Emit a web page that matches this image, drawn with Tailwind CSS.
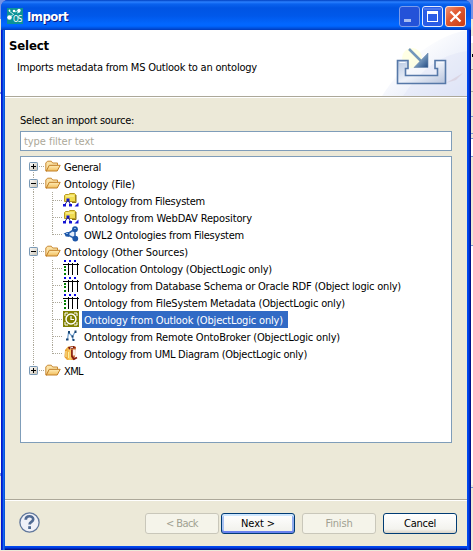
<!DOCTYPE html>
<html lang="en">
<head>
<meta charset="utf-8">
<title>Import</title>
<script src="https://cdn.jsdelivr.net/npm/@tailwindcss/browser@4"></script>
</head>
<body class="w-[473px] h-[551px] overflow-hidden bg-[#ece9d8] font-['DejaVu_Sans_Condensed','DejaVu_Sans',sans-serif] text-[11px] leading-[17px] text-black">
<svg width="0" height="0" class="absolute">
  <defs>
    <linearGradient id="fg" x1="0" y1="0" x2="0" y2="1"><stop offset="0" stop-color="#ffedb8"/><stop offset="1" stop-color="#f1bd5c"/></linearGradient>
    <linearGradient id="bx" x1="0" y1="0" x2="1" y2="1"><stop offset="0" stop-color="#fff"/><stop offset="1" stop-color="#c8c1b2"/></linearGradient>
    <linearGradient id="tray" x1="0" y1="0" x2="1" y2="1"><stop offset="0" stop-color="#b8c9e2"/><stop offset=".5" stop-color="#edf1f9"/><stop offset="1" stop-color="#b8c4dc"/></linearGradient>
    <linearGradient id="arr" x1="0" y1="0" x2="1" y2="1"><stop offset="0" stop-color="#c5d8e8"/><stop offset=".6" stop-color="#6387b0"/><stop offset="1" stop-color="#234b83"/></linearGradient>
    <linearGradient id="swA" x1="0" y1="0" x2="1" y2="1"><stop offset=".3" stop-color="#fff"/><stop offset="1" stop-color="#dce3f6"/></linearGradient>
    <linearGradient id="bk" x1="0" y1="0" x2="1" y2="0"><stop offset="0" stop-color="#e08a1c"/><stop offset=".5" stop-color="#ffd56a"/><stop offset="1" stop-color="#b33c12"/></linearGradient>
    <symbol id="plus" viewBox="0 0 9 9"><rect x=".5" y=".5" width="8" height="8" rx=".7" fill="url(#bx)" stroke="#7898b5"/><path d="M2 4.500h5M4.500 2v5" stroke="#000"/></symbol>
    <symbol id="minus" viewBox="0 0 9 9"><rect x=".5" y=".5" width="8" height="8" rx=".7" fill="url(#bx)" stroke="#7898b5"/><path d="M2 4.500h5" stroke="#000"/></symbol>
    <symbol id="folder" viewBox="0 0 16 16"><path d="M.8 13V5L2.500 3.200h3.800L7.700 5h4.800v2.500H4.300L1.500 13.300z" fill="#fbe2a5" stroke="#c98a35"/><path d="M4.300 7.300h10.900l-3 5.700H1.300z" fill="url(#fg)" stroke="#c28028"/></symbol>
    <symbol id="fileonto" viewBox="0 0 16 16"><path d="M1.500 9.500V3.500l1-1h3L7 1.500h4.500l1 1v7z" fill="#f0dc50" stroke="#b89a20"/><path d="M3 4h8" stroke="#fff8b0"/><path d="M13 3v7.500H9" stroke="#8c7412" fill="none"/><path d="M3.500 6.500h3v3h-3zM0 12h3v2.500H0zM6 12h3v2.500H6z" fill="#1212d8"/><path d="M5 8L2 12.500M5 8l2.500 4.500" stroke="#1a1aa0"/><path d="M15.500 10.500v4h-4z" fill="#1212d8"/></symbol>
    <symbol id="owl" viewBox="0 0 16 16"><path d="M3.500 8.500L12 3v9.500z" fill="#e5eefb" stroke="#2a62ad" stroke-width="1.500"/><circle cx="12" cy="3.200" r="2.900" fill="#1c56a8"/><circle cx="12.300" cy="12.600" r="2.900" fill="#1c56a8"/><path d="M.5 7.500l5.500-1.500v5z" fill="#1c56a8"/><circle cx="4.200" cy="8.500" r="2.300" fill="#1c56a8"/><path d="M11 2.500h2M3 7.500h2" stroke="#8db6e8"/></symbol>
    <symbol id="table" viewBox="0 0 16 16" shape-rendering="crispEdges"><path d="M1 0h2v2H1zM6 0h2v2H6zM11 0h2v2h-2z" fill="#0808e8"/><path d="M1 6h2v2H1zM1 9h2v2H1zM1 13h2v2H1z" fill="#008000"/><path d="M0 4.500h16M5.500 3v12M9.500 3v12M14.500 3v12" stroke="#000"/></symbol>
    <symbol id="clock" viewBox="0 0 16 16"><path d="M0 0h16v16H0z" fill="#808000"/><circle cx="8" cy="8" r="5" fill="none" stroke="#fff" stroke-width="1.500"/><path d="M8 5v3.500h3" fill="none" stroke="#fff" stroke-width="1.200"/><path d="M2 5V2h3M11 2h3v3M2 11v3h3M11 14h3v-3" fill="none" stroke="#fff"/></symbol>
    <symbol id="nodes" viewBox="0 0 16 16"><path d="M4.500 12L5.500 4.500L9.500 8.500 12 4M9.500 8.500L10 12" fill="none" stroke="#6b9ccc" stroke-width="1.200"/><path d="M5 3h2v2.500H5zM11.500 2.500h2v2.500h-2zM3 10.500h2.500v2H3zM9.500 11h2v2h-2zM8.500 7.500h2v2h-2z" fill="#1a4674"/></symbol>
    <symbol id="book" viewBox="0 0 16 16"><path d="M2 5L5 1.500l6-.5 2 1-1 9-1 4H4L1.500 12z" fill="url(#bk)"/><path d="M5 2l6-1 1 2-6 1.500z" fill="#7c1910"/><path d="M7 3.200l3-1" stroke="#fff"/><path d="M9 4.500v7l2 2.500 3-1.500" stroke="#861a10" stroke-width="1.800" fill="none"/><path d="M9.800 4.500h3v6h-3z" fill="#fbeee4"/><path d="M3 6v6M5.500 7v6" stroke="#fff0a0"/></symbol>
  </defs>
</svg>

<div class="relative w-[473px] h-[551px] bg-[linear-gradient(#7593e5_0_19px,#ece9d8_19px_36px,#fff_36px_43px,#ece9d8_43px_69px,#aaa899_69px_70px,#ece9d8_70px_91px,#aaa899_91px_92px,#ece9d8_92px_116px,#7898c8_116px_117px,#ece9d8_117px_133px,#7898c8_133px_134px,#ece9d8_134px_138px,#7898c8_138px_139px,#fff_139px_156px,#7898c8_156px_157px,#ece9d8_157px_245px,#7898c8_245px_246px,#fff_246px_470px,#f7f6f0_470px_485px,#ece9d8_485px_487px,#7898c8_487px_488px,#ece9d8_488px)]">
  <div class="absolute left-0 top-0 w-px h-[551px] bg-[linear-gradient(#7593e5_0_19px,#ece9d8_19px_92px,#7593e5_92px_94px,#fff_94px_473px,#7593e5_473px_476px,#ece9d8_476px)]"></div>
  <div class="absolute left-[472px] top-[54px] w-px h-[3px] bg-black"></div>

  <main class="relative ml-px w-[470px] h-[550px] rounded-t-[7px] overflow-hidden bg-[#0831d9] flex flex-col">
    <header class="h-[30px] shrink-0 flex items-center pl-[6px] pr-[5px] bg-[linear-gradient(#0040c0_0,#2a80ff_2px,#0a62ee_4px,#0054e3_8px,#0058ea_16px,#0267ff_24px,#0066ff_26px,#0048d0_29px,#0038b8_30px)]">
      <svg class="w-4 h-4 mt-[1px]" viewBox="0 0 16 16"><rect width="16" height="16" fill="#0c9297"/><path d="M2 3l4 3M8 4l4-2M10 5l3-1M3 9l4-3" stroke="#b8eee9" stroke-width="1"/><circle cx="7" cy="3" r="1.300" fill="#fff"/><circle cx="12" cy="2.500" r="1.700" fill="#fff"/><circle cx="2.500" cy="9.500" r="2.300" fill="#fff"/><circle cx="2.500" cy="2.500" r=".9" fill="#fff"/><text x="6" y="14" font-size="8" letter-spacing="-.9" fill="#fff" font-family="DejaVu Sans Condensed">OS</text></svg>
      <h1 class="ml-1 mt-[3px] text-[13px] font-bold text-white [text-shadow:1px_1px_0_#0a1883]"><span data-font="bold 13px" data-w="41">Import</span></h1>
      <div class="ml-auto mt-[2px] flex gap-[2px]">
        <svg class="w-[21px] h-[21px]" viewBox="0 0 21 21"><rect x=".5" y=".5" width="20" height="20" rx="2.500" fill="#2452d8" stroke="#7b9bea"/><path d="M5 14.500h7" stroke="#a9bdf0" stroke-width="3"/></svg>
        <svg class="w-[21px] h-[21px]" viewBox="0 0 21 21"><rect x=".5" y=".5" width="20" height="20" rx="2.500" fill="#2a5ce6" stroke="#e3ebff"/><path d="M2 3h17" stroke="#6d92f2"/><rect x="5.500" y="5.500" width="10" height="10" fill="none" stroke="#fff"/><path d="M5 6.500h11" stroke="#fff" stroke-width="3"/></svg>
        <svg class="w-[21px] h-[21px]" viewBox="0 0 21 21"><defs><linearGradient id="cl" x2="1" y2="1"><stop stop-color="#f09478"/><stop offset=".4" stop-color="#e25b33"/><stop offset="1" stop-color="#c83a12"/></linearGradient></defs><rect x=".5" y=".5" width="20" height="20" rx="2.500" fill="url(#cl)" stroke="#fbe3dc"/><path d="M5.500 5.500l10 10M15.500 5.500l-10 10" stroke="#fff" stroke-width="2.200"/></svg>
      </div>
    </header>

    <div class="flex-1 min-h-0 px-1 pb-1 bg-[linear-gradient(90deg,#0019cf_0_1px,#0831d9_1px_2px,#166aee_2px_3px,#0855dd_3px_4px,#0048f1_4px_467px,#0040e0_467px_468px,#0029c0_468px_469px,#00138c_469px)]">
      <div class="h-[516px] flex flex-col bg-[#ece9d8] shadow-[0_1px_0_#0048f1,0_2px_0_#0040e0,0_3px_0_#0029c0,0_4px_0_#00138c]">
        <section class="relative h-[66px] shrink-0 bg-white flex justify-between">
          <div class="pl-1 pt-[7px]">
            <h2 class="text-[13px] font-bold leading-[17px]"><span data-font="bold 13px" data-w="40">Select</span></h2>
            <p class="pl-2 mt-[5px] text-[11px]"><span data-w="240">Imports metadata from MS Outlook to an ontology</span></p>
          </div>
          <svg class="w-[92px] h-[66px]" viewBox="0 0 92 66">
            <path d="M7 66C28 34 54 8 92 0v66z" fill="url(#swA)"/>
            <path d="M28 66C46 40 62 26 92 21v45z" fill="#dfe5f7" opacity=".45"/>
            <path d="M71 53l17-10-7 7-10 3z" fill="#c9a9b4" opacity=".3"/>
            <circle cx="37" cy="28" r="10" fill="#ffffd8" opacity=".7"/>
            <path d="M22.500 30.500h10.500v8h-2.500v7h32v-7h-2.500v-8h10.500v23h-48z" fill="url(#tray)" stroke="#5678a8" stroke-width="1.600"/>
            <path d="M24.500 32.500h6M62.500 32.500h6" stroke="#f5f8ff"/>
            <path d="M34 19l12 12" stroke="#7397ba" stroke-width="2.500"/>
            <path d="M53 23v14.500H39z" fill="url(#arr)" stroke="#6787ac" stroke-width=".6"/>
          </svg>
        </section>
        <div class="h-[2px] shrink-0 border-t border-[#aca899] bg-white"></div>

        <section class="pt-[14px] px-[15px] flex flex-col">
          <label class="h-[19px]"><span data-w="114">Select an import source:</span></label>
          <div class="h-5 w-[432px] border border-[#7f9db9] bg-white pl-[3px] leading-[19px] text-[#aca899]"><span data-w="70">type filter text</span></div>
          <div id="tree" class="mt-[5px] h-[287px] w-[432px] border border-[#7f9db9] bg-white pt-px"></div>
        </section>

        <div class="mt-auto h-[2px] shrink-0 border-t border-[#aca899] bg-white"></div>
        <footer class="h-[45px] shrink-0 flex pt-3 pl-[14px] pr-[10px]">
          <svg class="w-[21px] h-[21px] -mt-px" viewBox="0 0 21 21"><circle cx="10.500" cy="10.500" r="9.600" fill="#f0f1f8" stroke="#60779c" stroke-width="1.300"/><path d="M6.700 7.700C6.800 3.200 14.200 3.200 14.200 7.300c0 2.700-3.600 2.600-3.600 5.300" fill="none" stroke="#506a93" stroke-width="2.700"/><rect x="9.200" y="14.200" width="2.800" height="2.800" fill="#506a93"/></svg>
          <div class="ml-auto flex text-center leading-[20px]">
            <button class="w-[74px] h-[21px] rounded-[3px] border border-[#c9c7ba] bg-[#f5f4ea] text-[#a1a192]"><span data-w="32">&lt; Back</span></button>
            <button class="ml-[2px] w-[74px] h-[21px] rounded-[3px] border border-[#003c74] bg-[linear-gradient(#fff,#f0f0ea)] shadow-[inset_0_2px_0_#cee7ff,inset_0_-2px_0_#6982ee,inset_2px_0_0_#a9c3f2,inset_-2px_0_0_#8fabee]"><span data-w="34">Next &gt;</span></button>
            <button class="ml-[7px] w-[74px] h-[21px] rounded-[3px] border border-[#c9c7ba] bg-[#f5f4ea] text-[#a1a192]"><span data-w="27">Finish</span></button>
            <button class="ml-[7px] w-[74px] h-[21px] rounded-[3px] border border-[#003c74] bg-[linear-gradient(#fff,#f3f3ee_80%,#d9d3c6)]"><span data-w="32">Cancel</span></button>
          </div>
        </footer>
      </div>
    </div>
  </main>
</div>

<script>
  // kind, icon, label, label width, last-in-group
  const rows = [
    ['plus', 'folder', 'General', 37],
    ['minus', 'folder', 'Ontology (File)', 71],
    ['', 'fileonto', 'Ontology from Filesystem', 121],
    ['', 'fileonto', 'Ontology from WebDAV Repository', 168],
    ['', 'owl', 'OWL2 Ontologies from Filesystem', 160, true],
    ['minus', 'folder', 'Ontology (Other Sources)', 124],
    ['', 'table', 'Collocation Ontology (ObjectLogic only)', 188],
    ['', 'table', 'Ontology from Database Schema or Oracle RDF (Object logic only)', 317],
    ['', 'table', 'Ontology from FileSystem Metadata (ObjectLogic only)', 261],
    ['', 'clock', 'Ontology from Outlook (ObjectLogic only)', 199],
    ['', 'nodes', 'Ontology from Remote OntoBroker (ObjectLogic only)', 256],
    ['', 'book', 'Ontology from UML Diagram (ObjectLogic only)', 223, true],
    ['plus', 'folder', 'XML', 19]
  ];
  document.getElementById('tree').innerHTML = rows.map(([kind, icon, label, w, last], i) => {
    const dots = 'stroke="#aca899" stroke-dasharray="1 1" shape-rendering="crispEdges" fill="none"';
    const sel = icon === 'clock';
    const text = `<span class="h-[17px] pl-[2px] leading-[19px] ${sel ? 'pr-[5px] bg-[#316ac5] text-white' : ''}"><span data-w="${w}">${label}</span></span>`;
    if (kind) {
      const top = i === 0 ? 8 : 0, end = i === rows.length - 1 ? 8 : 17;
      return `<div class="h-[17px] flex whitespace-nowrap"><svg class="w-6 h-[17px]" viewBox="0 0 24 17"><path d="M12.500 ${top}V${end}M18 8.500h6" ${dots}/><use href="#${kind}" x="8" y="4" width="9" height="9"/></svg><svg class="w-4 h-4"><use href="#${icon}"/></svg><span class="w-px"></span>${text}</div>`;
    }
    return `<div class="h-[17px] flex whitespace-nowrap"><svg class="w-[42px] h-[17px]" viewBox="0 0 42 17"><path d="M12.500 0V17M31.500 0V${last ? 9 : 17}M32 8.500h10" ${dots}/></svg><svg class="w-4 h-4"><use href="#${icon}"/></svg><span class="w-[3px]"></span>${text}</div>`;
  }).join('');

  // Set each label's tracking so that it takes its designed width
  const ctx = document.createElement('canvas').getContext('2d');
  document.querySelectorAll('[data-w]').forEach(el => {
    ctx.font = (el.dataset.font || '11px') + ' "DejaVu Sans Condensed"';
    const d = (Number(el.dataset.w) - ctx.measureText(el.textContent).width) / el.textContent.length;
    el.style.whiteSpace = 'nowrap';
    el.style.letterSpacing = d.toFixed(3) + 'px';
  });
</script>
</body>
</html>
